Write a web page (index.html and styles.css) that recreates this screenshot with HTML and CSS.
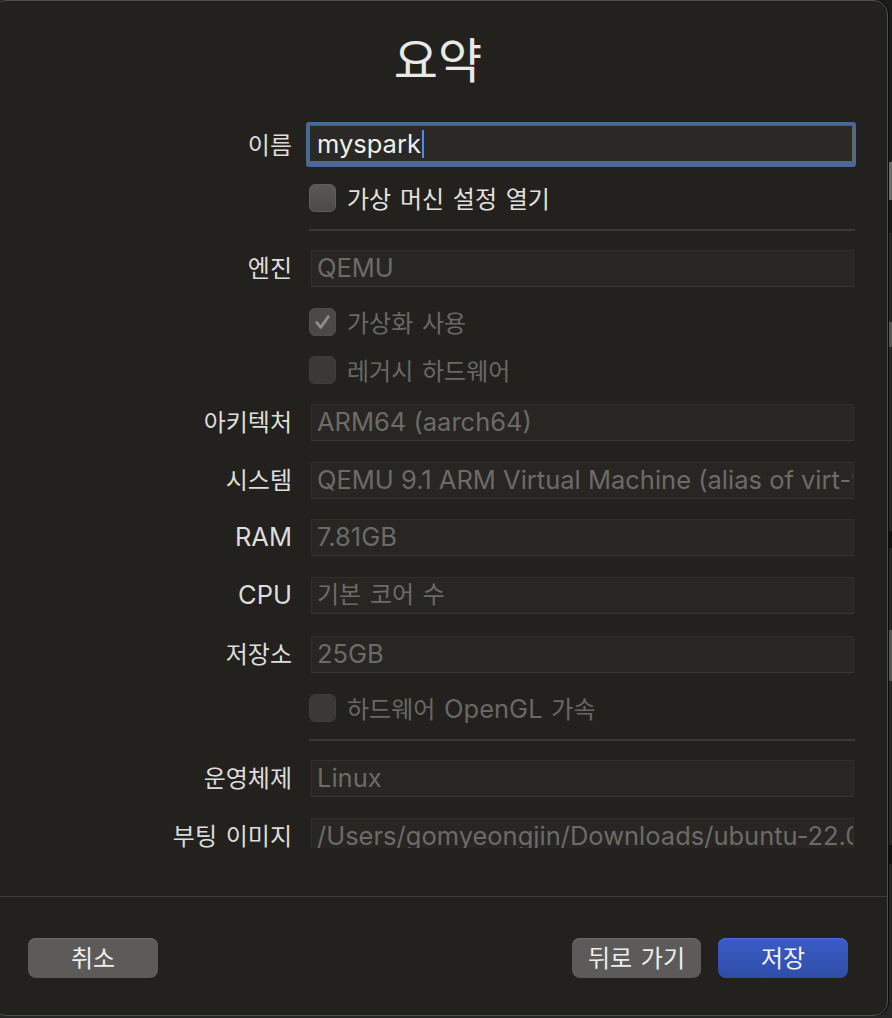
FILE: index.html
```html
<!DOCTYPE html>
<html lang="ko">
<head>
<meta charset="utf-8">
<title>요약</title>
<link rel="stylesheet" href="styles.css">
</head>
<body>
<div class="window">
  <div class="scroll">
    <h1 class="title">요약</h1>
    <div class="form">
      <div class="row name-row">
        <span class="label">이름</span>
        <div class="name-ring"><div class="name-field"><span class="name-text" lang="en">myspark</span><span class="caret"></span></div></div>
      </div>
      <div class="row check-row">
        <span class="check"></span><span class="check-label">가상 머신 설정 열기</span>
      </div>
      <div class="sep"></div>
      <div class="row field-row">
        <span class="label">엔진</span>
        <div class="field" lang="en">QEMU</div>
      </div>
      <div class="row check-row disabled">
        <span class="check checked"><svg viewBox="0 0 28 28" width="28" height="28"><path d="M7.5 14.5 L12 20 L20.5 8" fill="none" stroke="#8d8c89" stroke-width="3.2" stroke-linecap="round" stroke-linejoin="round"/></svg></span><span class="check-label">가상화 사용</span>
      </div>
      <div class="row check-row disabled">
        <span class="check"></span><span class="check-label">레거시 하드웨어</span>
      </div>
      <div class="row field-row">
        <span class="label">아키텍처</span>
        <div class="field" lang="en">ARM64 (aarch64)</div>
      </div>
      <div class="row field-row">
        <span class="label">시스템</span>
        <div class="field" lang="en">QEMU 9.1 ARM Virtual Machine (alias of virt-9.1) (virt)</div>
      </div>
      <div class="row field-row">
        <span class="label" lang="en">RAM</span>
        <div class="field" lang="en">7.81GB</div>
      </div>
      <div class="row field-row">
        <span class="label" lang="en">CPU</span>
        <div class="field">기본 코어 수</div>
      </div>
      <div class="row field-row">
        <span class="label">저장소</span>
        <div class="field" lang="en">25GB</div>
      </div>
      <div class="row check-row disabled">
        <span class="check"></span><span class="check-label">하드웨어 <span lang="en">OpenGL</span> 가속</span>
      </div>
      <div class="sep"></div>
      <div class="row field-row">
        <span class="label">운영체제</span>
        <div class="field" lang="en">Linux</div>
      </div>
      <div class="row field-row">
        <span class="label">부팅 이미지</span>
        <div class="field" lang="en">/Users/gomyeongjin/Downloads/ubuntu-22.04.5-live-server-arm64.iso</div>
      </div>
    </div>
  </div>
  <div class="footer">
    <button class="btn">취소</button>
    <div class="footer-right">
      <button class="btn">뒤로 가기</button>
      <button class="btn primary">저장</button>
    </div>
  </div>
</div>
</body>
</html>
```
FILE: styles.css
```css
* { box-sizing: border-box; }
html, body { margin: 0; padding: 0; }
body {
  width: 892px;
  height: 1018px;
  overflow: hidden;
  font-family: "Inter", "Noto Sans CJK KR", sans-serif;
  background: linear-gradient(to bottom,
    #1c1c1c 0, #1c1c1c 162px,
    #6a6a69 162px, #6a6a69 200px,
    #181818 200px, #181818 233px,
    #262626 233px, #262626 322px,
    #555554 322px, #555554 347px,
    #262626 347px, #262626 531px,
    #111 531px, #111 548px,
    #262626 548px, #262626 630px,
    #555554 630px, #555554 681px,
    #262626 681px, #262626 845px,
    #111 845px, #111 864px,
    #262626 864px);
}
[lang="en"] {
  font-family: "Inter", sans-serif;
  font-size: 25.5px;
  letter-spacing: 0;
  word-spacing: 0;
}
.window {
  margin-left: -8px;
  width: 896px;
  height: 1016px;
  background: #22211e;
  border: 1px solid #4f4e4b;
  border-radius: 14px;
  box-shadow: 1px 0 0 #0b0b0b;
  display: flex;
  flex-direction: column;
  padding-left: 7px;
}
.scroll {
  height: 847px;
  overflow: hidden;
  flex: none;
}
.title {
  margin: 35px 0 0;
  height: 52px;
  line-height: 50px;
  text-align: center;
  font-size: 48px;
  font-weight: 400;
  color: #e9e9e7;
  padding-right: 11px;
}
.form {
  width: 856px;
  display: flex;
  flex-direction: column;
}
.row {
  display: grid;
  grid-template-columns: 292px 543px;
  column-gap: 19px;
  align-items: center;
  font-size: 24px;
  word-spacing: 2px;
}
.label {
  text-align: right;
  color: #dedddb;
  white-space: nowrap;
  padding-bottom: 3px;
}
.name-row { margin-top: 34px; height: 45px; grid-template-columns: 292px 550px; column-gap: 14px; }
.name-ring {
  height: 45px;
  border: 3px solid #4a6994;
  border-bottom-width: 5px;
  border-radius: 3px;
  background: #2a2926;
}
.name-field {
  height: 100%;
  border: 1px solid #67665f;
  border-top-color: #5a5955;
  display: flex;
  align-items: center;
  padding-left: 7px;
  color: #f0f0ee;
}
.caret {
  width: 2px;
  height: 28px;
  background: #4d8af0;
  margin-left: 1px;
}
.field-row { margin-top: 21px; height: 37px; }
.check-row + .field-row { margin-top: 19px; }
.sep + .field-row { margin-top: 0; }
.field {
  height: 37px;
  background: #272623;
  border: 1px solid #302f2c;
  border-bottom-color: #383734;
  color: #6c6b68;
  padding-left: 5px;
  line-height: 34px;
  white-space: nowrap;
  overflow: hidden;
}
.check-row {
  margin-top: 22px;
  height: 28px;
  display: flex;
  column-gap: 0;
  align-items: center;
  padding-left: 309px;
}
.check-row + .check-row { margin-top: 20px; }
.name-row + .check-row { margin-top: 17px; }
.check {
  width: 27px;
  height: 28px;
  border-radius: 6px;
  background: linear-gradient(#5a5956, #4b4a47);
  border: 1px solid #5f5e5b;
  flex: none;
  display: flex;
  align-items: center;
  justify-content: center;
}
.check svg { display: block; }
.check-label {
  margin-left: 11px;
  color: #e2e1df;
  white-space: nowrap;
  padding-bottom: 2px;
}
.disabled .check {
  background: #3a3936;
  border-color: #3e3d3a;
}
.disabled .check.checked {
  background: #4a4946;
  border-color: #4e4d4a;
}
.disabled .check-label { color: #696865; }
.sep {
  margin: 17px 0 18px 309px;
  height: 2px;
  width: 546px;
  background: #393835;
}
.footer {
  margin-top: 48px;
  border-top: 1px solid #3d3c39;
  padding: 41px 39px 0 28px;
  display: flex;
  justify-content: space-between;
  align-items: flex-start;
}
.footer-right { display: flex; gap: 17px; }
.btn {
  height: 40px;
  width: 130px;
  border: none;
  border-radius: 8px;
  background: #5c5b59;
  color: #eeeeec;
  font-family: "Inter", "Noto Sans CJK KR", sans-serif;
  font-size: 24px;
  word-spacing: 2px;
  padding: 0 0 4px;
  box-shadow: 0 1px 0 #6a6967 inset;
}
.footer-right .btn:first-child { width: 129px; }
.primary {
  background: linear-gradient(#3a5cc6, #2f4da8);
  box-shadow: 0 1px 0 #4d6ed3 inset;
  color: #f2f2f6;
}
```
